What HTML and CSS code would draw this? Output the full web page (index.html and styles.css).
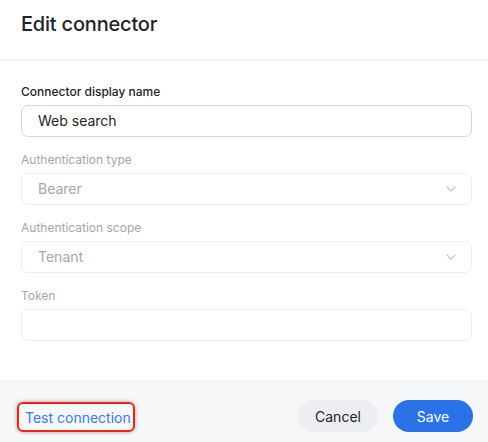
FILE: index.html
```html
<!DOCTYPE html>
<html>
<head>
<meta charset="utf-8">
<link rel="stylesheet" href="styles.css">
</head>
<body>
<div class="dialog">
  <header class="dialog-header">
    <h1 class="title">Edit connector</h1>
  </header>
  <main class="dialog-body">
    <div class="field">
      <label class="label">Connector display name</label>
      <div class="input">Web search</div>
    </div>
    <div class="field disabled">
      <label class="label">Authentication type</label>
      <div class="input select"><span>Bearer</span>
        <svg class="chev" width="10" height="6" viewBox="0 0 10 6"><path d="M1 1l4 4 4-4" fill="none" stroke="#c3c6cc" stroke-width="1.2" stroke-linecap="round" stroke-linejoin="round"/></svg>
      </div>
    </div>
    <div class="field disabled">
      <label class="label">Authentication scope</label>
      <div class="input select"><span>Tenant</span>
        <svg class="chev" width="10" height="6" viewBox="0 0 10 6"><path d="M1 1l4 4 4-4" fill="none" stroke="#c3c6cc" stroke-width="1.2" stroke-linecap="round" stroke-linejoin="round"/></svg>
      </div>
    </div>
    <div class="field disabled">
      <label class="label">Token</label>
      <div class="input"></div>
    </div>
  </main>
  <footer class="dialog-footer">
    <button class="link-btn">Test connection</button>
    <div class="actions">
      <button class="btn btn-secondary">Cancel</button>
      <button class="btn btn-primary">Save</button>
    </div>
  </footer>
</div>
</body>
</html>
```
FILE: styles.css
```css
* { box-sizing: border-box; }
html, body { margin: 0; padding: 0; background: #fff; }
body {
  font-family: Inter, "Noto Sans", "Liberation Sans", sans-serif;
  color: #1f2329;
  width: 488px;
  height: 442px;
  overflow: hidden;
}
.dialog { display: flex; flex-direction: column; height: 442px; }
.dialog-header {
  height: 61px;
  padding: 10px 21px 0;
  border-bottom: 2px solid #f3f4f6;
}
.title {
  margin: 0;
  font-size: 20px;
  font-weight: 500;
  line-height: 28px;
  color: #1f2329;
  letter-spacing: -0.2px;
}
.dialog-body {
  flex: 1;
  padding: 23px 16px 0 21px;
  display: flex;
  flex-direction: column;
  gap: 15px;
}
.field { display: flex; flex-direction: column; gap: 5px; }
.label {
  font-size: 12px;
  line-height: 16px;
  color: #1f2329;
  font-weight: 500;
}
.input {
  height: 32px;
  border: 1px solid #d5d7dc;
  border-radius: 7px;
  padding: 0 16px;
  font-size: 14px;
  line-height: 30px;
  color: #1f2329;
  display: flex;
  align-items: center;
  justify-content: space-between;
}
.disabled .label { color: #a3a6ad; font-weight: 400; }
.disabled .input { border-color: #eceef1; color: #a3a6ad; }
.chev { margin-right: -1px; }
.dialog-footer {
  height: 62px;
  background: #f6f7f9;
  padding: 20px 15px 0 17px;
  display: flex;
  justify-content: space-between;
  align-items: flex-start;
}
.link-btn {
  font-family: inherit;
  font-size: 14px;
  white-space: nowrap;
  color: #3a7af0;
  background: transparent;
  height: 30px;
  padding: 0 6px;
  border: 2px solid #f0230f;
  border-radius: 6px;
  box-shadow: 0 0 4px rgba(0,0,0,0.35);
  margin-top: 2px;
  width: 118px;
}
.actions { display: flex; gap: 15px; }
.btn {
  font-family: inherit;
  font-size: 14px;
  height: 32px;
  border: none;
  border-radius: 16px;
  width: 80px;
}
.btn-secondary { background: #eceef2; color: #1f2329; }
.btn-primary { background: #2a72e8; color: #fff; }
```
